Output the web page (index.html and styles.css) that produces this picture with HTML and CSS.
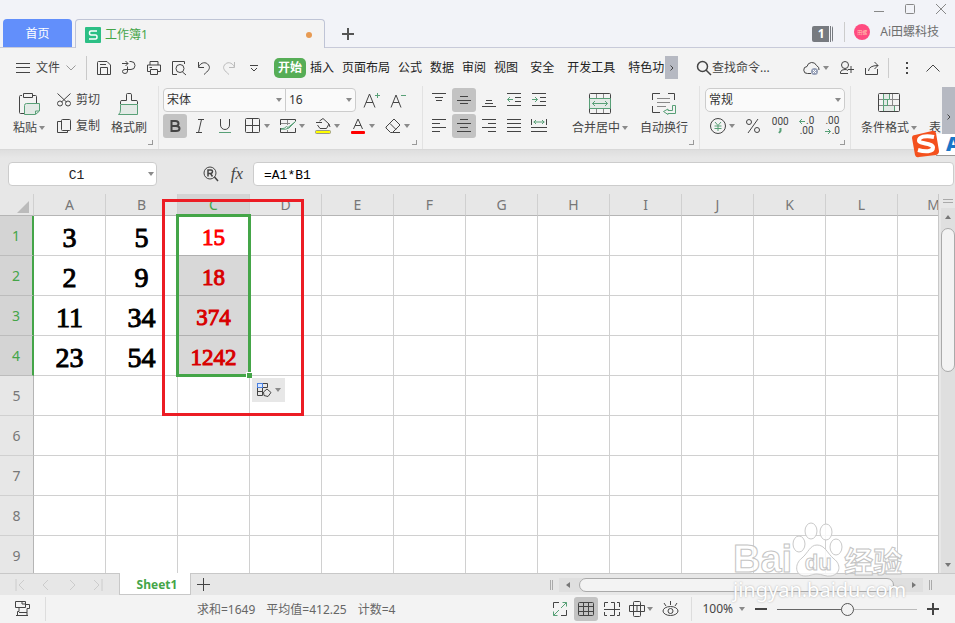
FILE: index.html
```html
<!DOCTYPE html>
<html lang="zh-CN">
<head>
    <meta charset="UTF-8">
    <meta name="viewport" content="width=device-width, initial-scale=1.0">
    <title>工作簿1</title>
    <link rel="stylesheet" href="styles.css">
</head>
<body>

    <!-- Title bar -->
    <header class="titlebar">
        <button class="home-tab">首页</button>
        <div class="doc-tab">
            <svg class="icon" width="16" height="16"><rect width="16" height="16" rx="1" fill="#2cbf85" stroke="none"/><path d="M12 4H6Q4.500 4 4.500 6T6 8H10.500Q12 8 12 10T10.500 12H4" stroke="#fff" stroke-width="1.500"/></svg>
            <span>工作簿1</span>
            <span class="unsaved"></span>
        </div>
        <button class="new-tab" aria-label="新建"><svg class="icon" width="12" height="12"><path d="M0 6H12M6 0V12" stroke-width="2"/></svg></button>
        <div class="title-right">
            <div class="window-buttons">
                <button aria-label="最小化"><svg class="icon" width="10" height="10"><path d="M0 7.500H10"/></svg></button>
                <button aria-label="最大化"><svg class="icon" width="10" height="10"><rect x=".5" y=".5" width="9" height="9" rx="1"/></svg></button>
                <button aria-label="关闭"><svg class="icon" width="10" height="10"><path d="M0 0L10 10M10 0L0 10"/></svg></button>
            </div>
            <div class="account">
                <span class="count">1</span>
                <span class="user"><span class="avatar">田螺</span>Ai田螺科技</span>
            </div>
        </div>
    </header>

    <!-- Menu -->
    <nav class="menubar">
        <button class="file-menu">
            <svg class="icon" width="14" height="12"><path d="M0 1.500H14M0 5.500H14M0 10.500H14"/></svg>
            文件
            <svg class="icon light" width="10" height="6"><path d="M.5.500L5 5L9.500.500"/></svg>
        </button>
        <div class="quick">
            <button aria-label="保存"><svg class="icon" width="16" height="16"><path d="M1.500 2.500Q1.500 1.500 2.500 1.500H11L14.500 5V14.500H1.500ZM4.500 14V7.500H11.500V14M4 4.500H10"/></svg></button>
            <button aria-label="输出"><svg class="icon" width="16" height="16"><path d="M1 3.500H7M4.500 1L7 3.500L4.500 6M8.500 1.500H10A4 4 0 0 1 10 9.500H4Q1.500 9.500 1.500 11.500T4 13.500Q6.500 13.500 6.500 11V6.500"/></svg></button>
            <button aria-label="打印"><svg class="icon" width="16" height="16"><path d="M4 5V1.500H12V5M4 11.500H1.500V5H14.500V11.500H12M4.500 9.500H11.500V14.500H4.500ZM3.500 7.500H6"/></svg></button>
            <button aria-label="打印预览"><svg class="icon" width="16" height="16"><path d="M6 14.500H1.500V1.500H13.500V4M11.500 12L15 15"/><circle cx="9" cy="8.500" r="4"/></svg></button>
            <button aria-label="撤销"><svg class="icon" width="16" height="16"><path d="M2.500 2V7.500H8M2.500 7C5 2 10 1.500 12.500 5S12 11 8 14.500"/></svg></button>
            <button aria-label="恢复" class="faded"><svg class="icon" width="16" height="16"><path d="M13.500 2V7.500H8M13.500 7C11 2 6 1.500 3.500 5S4 11 8 14.500"/></svg></button>
            <button aria-label="更多"><svg class="icon" width="16" height="16"><path d="M4 5.500H12M5 8L8 11L11 8"/></svg></button>
        </div>
        <div class="tabs">
            <a href="#" class="active">开始</a>
            <a href="#">插入</a>
            <a href="#">页面布局</a>
            <a href="#">公式</a>
            <a href="#">数据</a>
            <a href="#">审阅</a>
            <a href="#">视图</a>
            <a href="#" class="extra">安全</a>
            <a href="#" class="extra">开发工具</a>
            <a href="#" class="extra">特色功</a>
        </div>
        <button class="scroll-tabs" aria-label="更多选项卡"><svg class="icon" width="4" height="6"><path d="M.5.500L3 3L.5 5.500"/></svg></button>
        <button class="search">
            <svg class="icon" width="16" height="16"><circle cx="6.500" cy="6.500" r="5" stroke-width="1.500"/><path d="M10 10L15 15" stroke-width="1.500"/></svg>查找命令...
        </button>
        <div class="share">
            <button aria-label="云同步"><svg class="icon" width="18" height="16"><path d="M8 13.500H4.500A3.500 3.500 0 0 1 4 6.500A5 5 0 0 1 13.500 5.500Q16.500 7 16 10"/><circle cx="11.500" cy="11.500" r="3.500" fill="#97a1b8" stroke="none"/><path d="M10 10L13 13M13 10L10 13" stroke="#fff"/></svg><i class="caret"></i></button>
            <button aria-label="协作"><svg class="icon" width="15" height="16"><circle cx="6" cy="5" r="3.500"/><path d="M9 13.500H1.500V12Q2 9.500 6 9.500Q8 9.500 9 10.500M12 6V13M9 9.500H15"/></svg></button>
            <button aria-label="分享"><svg class="icon" width="16" height="16"><path d="M1.500 8V14.500H13.500V9M4.500 11Q5 5.500 14 5.500M10.500 2L14 5.500L10.500 9"/></svg></button>
        </div>
        <div class="menu-end">
            <button aria-label="选项"><svg class="icon" width="4" height="14"><path d="M2 1V3M2 6V8M2 11V13" stroke-width="2"/></svg></button>
            <button aria-label="收起功能区"><svg class="icon" width="14" height="8"><path d="M.5 7.500L7 1L13.500 7.500"/></svg></button>
        </div>
    </nav>

    <!-- Ribbon -->
    <section class="ribbon">
        <div class="group clipboard">
            <div class="tools">
                <button class="big">
                    <svg class="icon" width="24" height="24"><path d="M5 3.500H3.500Q2.500 3.500 2.500 4.500V20.500Q2.500 21.500 3.500 21.500H7M16 3.500H18.500Q19.500 3.500 19.500 4.500V11M6.500 1.500H15.500V5.500H6.500Z"/><path d="M9.500 11.500H22.500V19L18.500 22.500H7.500V13.500Q7.500 11.500 9.500 11.500ZM18.500 22V19H22" stroke="#58a077" fill="#e3eae6"/></svg>
                    <span>粘贴<i class="caret"></i></span>
                </button>
                <div class="stack">
                    <button><svg class="icon" width="16" height="16"><circle cx="4" cy="11.500" r="2.500"/><circle cx="12" cy="11.500" r="2.500"/><path d="M1.500 1.500L10.500 10M14.500 1.500L5.500 10"/></svg>剪切</button>
                    <button><svg class="icon" width="16" height="16"><rect x="5.500" y="1.500" width="9" height="11" rx="1"/><path d="M5 3.500H1.500V14.500H11.500V13"/></svg>复制</button>
                </div>
                <button class="big">
                    <svg class="icon" width="24" height="24"><path d="M3.500 12V9.500Q3.500 8.500 5 8.500H9.500V2.500Q9.500 1.500 10.500 1.500H13Q14.500 1.500 14.500 2.500V8.500H19Q20.500 8.500 20.500 9.500V12"/><path d="M3.500 12.500H20.500V22.500H1.500Q3.500 21 3.500 18Z" stroke="#58a077" fill="#e3eae6"/></svg>
                    <span>格式刷</span>
                </button>
            </div>
            <i class="launcher"></i>
        </div>

        <div class="group font-group">
            <div class="tools">
                <div class="stack">
                    <div class="row">
                        <label class="drop font-name"><select aria-label="字体"><option>宋体</option></select><i class="caret"></i></label>
                        <label class="drop font-size"><select aria-label="字号"><option>16</option></select><i class="caret"></i></label>
                        <button aria-label="增大字号"><svg class="icon" width="18" height="16"><path d="M1 15.500L6.500 2L12 15.500M3 10.500H10"/><path d="M12 3.500H17M14.500 1V6" stroke="#58a077"/></svg></button>
                        <button aria-label="减小字号"><svg class="icon" width="18" height="16"><path d="M2 15.500L7 3L12 15.500M4 10.500H10"/><path d="M12 3.500H17" stroke="#58a077"/></svg></button>
                    </div>
                    <div class="row format">
                        <button class="on" aria-label="加粗"><svg class="icon" width="16" height="16"><path d="M4.500 3H8.500Q11.500 3 11.500 5.500T8.500 8H4.500ZM4.500 8H9Q12.500 8 12.500 10.500T9 13H4.500Z" stroke-width="2"/></svg></button>
                        <button aria-label="倾斜"><svg class="icon" width="16" height="16"><path d="M6 1.500H12M4 14.500H10M9.500 1.500L6.500 14.500"/></svg></button>
                        <button aria-label="下划线"><svg class="icon" width="16" height="16"><path d="M3.500 1V7A4.500 4.500 0 0 0 12.500 7V1"/><path d="M2 14.500H14" stroke="#58a077"/></svg></button>
                        <button class="wide" aria-label="边框"><svg class="icon" width="16" height="16"><rect x=".5" y=".5" width="14" height="14" rx="1"/><path d="M7.500 1V15M1 7.500H15"/></svg><i class="caret"></i></button>
                        <button class="wide" aria-label="表格样式"><svg class="icon" width="16" height="16"><path d="M15.500 3V1.500H.5V7M.5 10V14.500H15.500V10"/><path d="M1 5.500H10M7.500 2V7M7.500 12V14M1 10.500H3" stroke="#888"/><path d="M15.500 3.500L9 10Q6 12 1 11Q5 10.500 6.500 8.500L8 9.500L15.500 3.500" stroke="#58a077"/></svg><i class="caret"></i></button>
                        <button class="wide" aria-label="填充颜色"><svg class="icon" width="16" height="18"><path d="M1 5.500H7M4.500 4L8 1.500L14 7L11.500 11.500H5L2.500 8M14 7L15 10"/><rect x=".5" y="13.500" width="15" height="3" rx="1" fill="#ff0" stroke="#998"/></svg><i class="caret"></i></button>
                        <button class="wide" aria-label="字体颜色"><svg class="icon" width="16" height="18"><path d="M3.500 12L8 2L12.500 12M5 8.500H11"/><rect x="1" y="14" width="14" height="3" rx="1" fill="#f00" stroke="none"/></svg><i class="caret"></i></button>
                        <button class="wide" aria-label="清除"><svg class="icon" width="16" height="16"><path d="M1 9L9 1L15 7L7.500 14.500H5.500L1 10ZM5 5.500L11 11.500M7.500 14.500H15"/></svg><i class="caret"></i></button>
                    </div>
                </div>
            </div>
            <i class="launcher"></i>
        </div>

        <div class="group align-group">
            <div class="tools">
                <div class="align-grid">
                    <button aria-label="顶端对齐"><svg class="icon" width="16" height="16"><path d="M1 1.500H15M4 5.500H12M5 8.500H11"/></svg></button>
                    <button class="on" aria-label="垂直居中"><svg class="icon" width="16" height="16"><path d="M4 4.500H12M1 8.500H15M4 11.500H12"/></svg></button>
                    <button aria-label="底端对齐"><svg class="icon" width="16" height="16"><path d="M5 8.500H11M4 11.500H12M1 14.500H15"/></svg></button>
                    <button aria-label="减少缩进"><svg class="icon" width="16" height="16"><path d="M1 1.500H15M9 5.500H15M9 9.500H15M1 13.500H15"/><path d="M1.500 7.500H7M4 5L1.500 7.500L4 10" stroke="#58a077"/></svg></button>
                    <button aria-label="增加缩进"><svg class="icon" width="16" height="16"><path d="M1 1.500H15M9 5.500H15M9 9.500H15M1 13.500H15"/><path d="M1 7.500H6.500M4 5L6.500 7.500L4 10" stroke="#58a077"/></svg></button>
                    <button aria-label="左对齐"><svg class="icon" width="16" height="16"><path d="M1 1.500H15M1 5.500H9M1 9.500H15M1 13.500H9"/></svg></button>
                    <button class="on" aria-label="水平居中"><svg class="icon" width="16" height="16"><path d="M4 1.500H12M1 5.500H15M4 9.500H12M1 13.500H15"/></svg></button>
                    <button aria-label="右对齐"><svg class="icon" width="16" height="16"><path d="M1 1.500H15M7 5.500H15M1 9.500H15M7 13.500H15"/></svg></button>
                    <button aria-label="两端对齐"><svg class="icon" width="16" height="16"><path d="M1 1.500H15M1 5.500H15M1 9.500H15M1 13.500H15"/></svg></button>
                    <button aria-label="分散对齐"><svg class="icon" width="16" height="16"><path d="M.5 1V7M15.500 1V7M0 9.500H16M0 13.500H16"/><path d="M2.500 4H13.500M5 2L3 4L5 6M11 2L13 4L11 6" stroke="#58a077"/></svg></button>
                </div>
                <button class="big merge">
                    <svg class="icon" width="24" height="24"><rect x="1.500" y="1.500" width="21" height="20" rx="1"/><path d="M8.500 2V6M15.500 2V6M8.500 17V21M15.500 17V21" stroke="#888"/><path d="M1.500 6.500H22.500V16.500H1.500Z" stroke="#58a077" fill="#e3eae6"/><path d="M4.500 11.500H19.500M7 9L4.500 11.500L7 14M17 9L19.500 11.500L17 14" stroke="#58a077"/></svg>
                    <span>合并居中<i class="caret"></i></span>
                </button>
                <button class="big wrap">
                    <svg class="icon" width="24" height="24"><path d="M8 1.500H.5V8M16 1.500H22.500V8M.5 14V20.500H8"/><path d="M5 6.500H18M5 10.500H18M5 14.500H14" stroke="#888"/><path d="M20.500 13.500H23.500V21.500H16V22.500L11.500 19.500L16 17V18.500H20.500Z" stroke="#58a077"/></svg>
                    <span>自动换行</span>
                </button>
            </div>
            <i class="launcher"></i>
        </div>

        <div class="group number-group">
            <div class="tools">
                <div class="stack">
                    <label class="drop number"><select aria-label="数字格式"><option>常规</option></select><i class="caret"></i></label>
                    <div class="row numbers">
                        <button aria-label="货币"><svg class="icon" width="16" height="16"><circle cx="8" cy="8" r="7.500"/><path d="M5 4L8 7.500L11 4M8 7.500V13M4.500 8H11.500M4.500 10.500H11.500" stroke="#58a077"/></svg><i class="caret"></i></button>
                        <button aria-label="百分比"><svg class="icon" width="16" height="16"><circle cx="4" cy="4" r="2.500"/><circle cx="12" cy="12" r="2.500"/><path d="M13 1L3 15"/></svg></button>
                        <button class="digits" aria-label="千位分隔"><span>000</span><svg class="icon green" width="4" height="8"><path d="M2.500 1V4L1 6" stroke-width="2"/></svg></button>
                        <button class="digits" aria-label="增加小数位"><span><svg class="icon green" width="7" height="7"><path d="M.5 3.500H6M3 1L.5 3.500L3 6"/></svg>.0</span><span>.00</span></button>
                        <button class="digits" aria-label="减少小数位"><span>.00</span><span><svg class="icon green" width="7" height="7"><path d="M0 3.500H5.500M3 1L5.500 3.500L3 6"/></svg>.0</span></button>
                    </div>
                </div>
            </div>
            <i class="launcher"></i>
        </div>

        <div class="group style-group">
            <div class="tools">
                <button class="big">
                    <svg class="icon" width="24" height="24"><path d="M6.500 1.500H12.500V7.500H6.500ZM6.500 7.500H10.500V13.500H6.500ZM6.500 13.500H17.500V19.500H6.500Z" stroke="#58a077" fill="#e3eae6"/><path d="M2 7.500H6M13 7.500H22M2 13.500H6M11 13.500H22M15.500 2V13" stroke="#888"/><rect x="1.500" y="1.500" width="21" height="18" rx="1"/></svg>
                    <span>条件格式<i class="caret"></i></span>
                </button>
                <button class="big table-style"><span>表</span></button>
            </div>
        </div>
        <button class="scroll-ribbon" aria-label="更多工具"><svg class="icon" width="4" height="6"><path d="M.5.500L3 3L.5 5.500"/></svg></button>

        <!-- Input method badge floating over the ribbon -->
        <div class="ime">
            <svg width="28" height="28" viewBox="0 0 28 28"><path d="M3 5Q0 5 0 8L3 25Q4 28 7 27L24 25Q27 24 27 21L24 3Q23 0 20 1Z" fill="#f4511e"/><path d="M22 7C13 5 7 7 7 10.500S21 13 21 17.500S13 22 6 20" fill="none" stroke="#fff" stroke-width="4"/></svg>
            <b>A</b>
        </div>
    </section>

    <!-- Formula bar -->
    <section class="formula-bar">
        <div class="drop name-box"><input type="text" value="C1" aria-label="名称框"><i class="caret"></i></div>
        <button aria-label="查找公式"><svg class="icon" width="16" height="16"><circle cx="7" cy="7" r="6"/><path d="M5 10.500V4H8Q9.500 4 9.500 5.500T8 7.500H5M7.500 7.500L9.500 10.500M11.500 11L15 15" stroke-width="1.500"/></svg></button>
        <button class="fx">fx</button>
        <input class="formula" type="text" value="=A1*B1" aria-label="编辑栏">
    </section>

    <!-- Sheet -->
    <main class="sheet">
        <div class="grid">
            <table>
                <thead>
                    <tr><th class="corner"><svg width="12" height="12"><path d="M12 0V12H0Z" fill="#bbb"/></svg></th><th>A</th><th>B</th><th class="picked">C</th><th>D</th><th>E</th><th>F</th><th>G</th><th>H</th><th>I</th><th>J</th><th>K</th><th>L</th><th>M</th></tr>
                </thead>
                <tbody>
                    <tr><th class="picked">1</th><td>3</td><td>5</td><td class="result first">15</td><td></td><td></td><td></td><td></td><td></td><td></td><td></td><td></td><td></td><td></td></tr>
                    <tr><th class="picked">2</th><td>2</td><td>9</td><td class="result">18</td><td></td><td></td><td></td><td></td><td></td><td></td><td></td><td></td><td></td><td></td></tr>
                    <tr><th class="picked">3</th><td>11</td><td>34</td><td class="result">374</td><td></td><td></td><td></td><td></td><td></td><td></td><td></td><td></td><td></td><td></td></tr>
                    <tr><th class="picked">4</th><td>23</td><td>54</td><td class="result">1242</td><td></td><td></td><td></td><td></td><td></td><td></td><td></td><td></td><td></td><td></td></tr>
                    <tr><th>5</th><td></td><td></td><td></td><td></td><td></td><td></td><td></td><td></td><td></td><td></td><td></td><td></td><td></td></tr>
                    <tr><th>6</th><td></td><td></td><td></td><td></td><td></td><td></td><td></td><td></td><td></td><td></td><td></td><td></td><td></td></tr>
                    <tr><th>7</th><td></td><td></td><td></td><td></td><td></td><td></td><td></td><td></td><td></td><td></td><td></td><td></td><td></td></tr>
                    <tr><th>8</th><td></td><td></td><td></td><td></td><td></td><td></td><td></td><td></td><td></td><td></td><td></td><td></td><td></td></tr>
                    <tr><th>9</th><td></td><td></td><td></td><td></td><td></td><td></td><td></td><td></td><td></td><td></td><td></td><td></td><td></td></tr>
                </tbody>
            </table>
            <div class="selection"></div>
            <div class="handle"></div>
            <button class="fill-options" aria-label="自动填充选项">
                <svg class="icon" width="16" height="16"><path d="M1.500 6V13.500H6.500V6M1.500 9.500H6M6.500 1.500H11.500V5.500H6.500M11 7L15 10.500L12 14.500L8 13.500L7.500 10Z"/><rect x="1.500" y="1.500" width="5" height="4" fill="#dce9ff" stroke="#4a80e0"/></svg>
                <i class="caret"></i>
            </button>
            <div class="red-frame"></div>
        </div>
        <div class="v-scroll">
            <i class="split"></i>
            <div class="v-track">
                <i class="arrow up"></i>
                <div class="v-thumb"></div>
                <i class="arrow down"></i>
            </div>
        </div>
    </main>

    <!-- Sheet tabs and horizontal scroll bar -->
    <section class="sheet-bar">
        <div class="sheet-nav">
            <button aria-label="第一张"><svg class="icon" width="10" height="12"><path d="M1 0V12M9 1L4 6L9 11"/></svg></button>
            <button aria-label="上一张"><svg class="icon" width="10" height="12"><path d="M7 1L2 6L7 11"/></svg></button>
            <button aria-label="下一张"><svg class="icon" width="10" height="12"><path d="M3 1L8 6L3 11"/></svg></button>
            <button aria-label="最后一张"><svg class="icon" width="10" height="12"><path d="M9 0V12M1 1L6 6L1 11"/></svg></button>
        </div>
        <button class="sheet-tab">Sheet1</button>
        <button class="add-sheet" aria-label="新建工作表"><svg class="icon" width="13" height="13"><path d="M0 6.500H13M6.500 0V13"/></svg></button>
        <div class="h-scroll">
            <i class="grip"></i>
            <div class="h-track">
                <i class="arrow left"></i>
                <div class="h-thumb"></div>
                <i class="arrow right"></i>
            </div>
            <i class="grip"></i>
        </div>
    </section>

    <!-- Status bar -->
    <footer class="status">
        <button class="macro" aria-label="宏"><svg class="icon" width="17" height="16"><path d="M1.500.500H11.500V6.500H1.500ZM11.500 3.500H15.500V7.500H13V14.500H3.500V10.500H5V7M5 11.500H13M2 14.500H14M8 1V3H11"/></svg></button>
        <div class="totals"><span>求和=1649</span><span>平均值=412.25</span><span>计数=4</span></div>
        <div class="views">
            <button aria-label="全屏"><svg class="icon" width="16" height="16"><path d="M7 1.500H1.500V7M9 14.500H14.500V9"/><path d="M9 7L14.500 1.500M10.500 1.500H14.500V5.500M7 9L1.500 14.500M5.500 14.500H1.500V10.500" stroke="#58a077"/></svg></button>
            <button class="on" aria-label="普通视图"><svg class="icon" width="16" height="14"><rect x=".5" y=".5" width="15" height="13" rx="1"/><path d="M5.500 1V13M10.500 1V13M1 4.500H15M1 9.500H15"/></svg></button>
            <button aria-label="分页预览"><svg class="icon" width="16" height="14"><path d="M4 .5H.5V5M7 .5H10.500V13.500M0 7.500H16M15.500 5V.5H13M.5 10V13.500H3M6 13.500H10.500M15.500 10V13.500H13"/></svg></button>
            <button class="with-caret" aria-label="页面布局"><svg class="icon" width="16" height="16"><rect x="4.500" y=".5" width="7" height="15" rx="1"/><path d="M4 4.500H.5V10.500H4M12 4.500H15.500V10.500H12M5 4.500H11M5 10.500H11M8 5V10"/></svg><i class="caret"></i></button>
            <button aria-label="护眼模式"><svg class="icon" width="17" height="16"><ellipse cx="8.500" cy="10" rx="7.500" ry="4.500"/><circle cx="8.500" cy="10" r="2.500"/><path d="M8.500 4V0M4 5L2 2M13 5L15 2"/></svg></button>
        </div>
        <div class="zoom">
            <button class="percent">100%<i class="caret"></i></button>
            <button aria-label="缩小"><svg class="icon" width="12" height="12"><path d="M0 6H12" stroke-width="2"/></svg></button>
            <input type="range" min="0" max="100" value="50" aria-label="缩放">
            <button aria-label="放大"><svg class="icon" width="12" height="12"><path d="M0 6H12M6 0V12" stroke-width="2"/></svg></button>
        </div>
    </footer>

    <div class="watermark">
        <div class="brand">
            <span class="bai">Bai</span>
            <span class="paw">
                <svg width="52" height="56" viewBox="0 0 52 56"><g fill="#fff" fill-opacity=".8" stroke="#c9c9c9"><ellipse cx="7" cy="22" rx="6" ry="8"/><ellipse cx="19" cy="9" rx="6" ry="8"/><ellipse cx="34" cy="10" rx="6" ry="8"/><ellipse cx="44" cy="25" rx="6" ry="8"/><path d="M25 23C18 23 16 31 10 36C2 42 3 54 13 54C19 54 20 52 25 52S34 55 39 54C49 52 49 42 42 37C35 31 33 23 25 23Z"/></g></svg>
                <span class="du">du</span>
            </span>
            <span class="jingyan">经验</span>
        </div>
        <div class="site">jingyan.baidu.com</div>
    </div>

</body>
</html>
```
FILE: styles.css
```css
* {
    box-sizing: border-box;
}

body {
    margin: 0;
    height: 100vh;
    display: flex;
    flex-direction: column;
    overflow: hidden;
    position: relative;
    font-family: "Noto Sans", "Noto Sans CJK SC", sans-serif;
    font-size: 12px;
    line-height: 16px;
    color: #444;
    background: #f3f3f3;
}

button, input, select {
    font: inherit;
    color: inherit;
    margin: 0;
    padding: 0;
    border: 0;
    background: none;
}

button {
    display: flex;
    align-items: center;
    justify-content: center;
    white-space: nowrap;
}

a {
    color: inherit;
    text-decoration: none;
}

.icon {
    display: block;
    flex: none;
    fill: none;
    stroke: currentColor;
}

.caret {
    flex: none;
    display: inline-block;
    border: 3px solid transparent;
    border-top: 4px solid #8a8a8a;
    border-bottom: 0;
}

.on {
    background: #c3c3c3;
    border-radius: 3px;
}

.green {
    color: #58a077;
}

/* Title bar */
.titlebar {
    flex: none;
    height: 48px;
    display: flex;
    align-items: flex-end;
    padding-left: 3px;
    background: #f2f3f8;
    border-bottom: 1px solid #c8cad9;
}

.home-tab {
    width: 69px;
    height: 28px;
    padding-top: 2px;
    color: #fff;
    background: #628ffb;
    border-radius: 4px 4px 0 0;
}

.doc-tab {
    width: 250px;
    height: 29px;
    margin: 0 0 -1px 3px;
    padding: 2px 12px 0 9px;
    display: flex;
    align-items: center;
    gap: 4px;
    color: #44a548;
    background: #f3f3f3;
    border: 1px solid #bfc4d6;
    border-bottom: 0;
    border-radius: 4px 4px 0 0;
}

.unsaved {
    width: 6px;
    height: 6px;
    margin-left: auto;
    border-radius: 50%;
    background: #e79a52;
}

.new-tab {
    height: 28px;
    padding: 1px 17px 0;
    color: #555;
}

.title-right {
    align-self: stretch;
    margin-left: auto;
    display: flex;
    flex-direction: column;
    align-items: flex-end;
}

.window-buttons {
    display: flex;
    gap: 21px;
    padding: 4px 9px 4px 0;
    color: #888;
}

.account {
    display: flex;
    align-items: center;
    gap: 11px;
    height: 28px;
    padding-right: 16px;
    color: #6f6f6f;
}

.count {
    width: 21px;
    margin-top: 4px;
    padding-right: 3px;
    text-align: center;
    color: #fff;
    font-weight: bold;
    background: linear-gradient(90deg, #777a80 17px, #f2f3f8 17px 18px, #777a80 18px 19px, #f2f3f8 19px 20px, #777a80 20px);
    border-radius: 2px;
}

.user {
    display: flex;
    align-items: center;
    gap: 10px;
    height: 20px;
    padding-left: 9px;
    border-left: 1px solid #ccc;
}

.avatar {
    display: flex;
    align-items: center;
    justify-content: center;
    width: 16px;
    height: 16px;
    border-radius: 50%;
    background: #ff4b80;
    color: #ffc9b0;
    font-size: 5px;
}

/* Menu */
.menubar {
    flex: none;
    display: flex;
    align-items: center;
    height: 38px;
    padding-top: 1px;
}

.file-menu {
    height: 24px;
    padding: 0 10px 0 16px;
    gap: 6px;
    border-right: 1px solid #c9c9c9;
}

.light {
    color: #999;
}

.quick {
    display: flex;
    gap: 9px;
    padding: 0 12px 0 9px;
}

.faded {
    color: #bbb;
}

.tabs {
    flex: 0 1 391px;
    display: flex;
    align-items: center;
    gap: 8px;
    overflow: hidden;
    white-space: nowrap;
    color: #222;
}

.tabs .active {
    padding: 2px 4px;
    margin-right: -4px;
    color: #fff;
    font-weight: bold;
    background: #56ad56;
    border-radius: 5px;
}

.tabs .extra {
    padding: 0 4px;
    margin-right: -3px;
}

.scroll-tabs {
    width: 13px;
    height: 23px;
    background: #b6b9c2;
}

.search {
    margin-left: 18px;
}

.share {
    display: flex;
    gap: 10px;
    margin-left: auto;
    padding-right: 8px;
}

.share .caret {
    margin-left: 2px;
}

.menu-end {
    display: flex;
    align-items: center;
    height: 20px;
    gap: 17px;
    padding: 0 15px 0 16px;
    border-left: 1px solid #ccc;
}

/* Ribbon */
.ribbon {
    flex: none;
    position: relative;
    display: flex;
    height: 64px;
    border-bottom: 1px solid #d8d8d8;
}

.group {
    flex: none;
    display: flex;
    flex-direction: column;
    justify-content: space-between;
    padding: 2px 0 4px;
}

.group + .group {
    border-left: 1px solid #e2e2e2;
}

.tools {
    display: flex;
}

.stack {
    display: flex;
    flex-direction: column;
    gap: 2px;
}

.stack button {
    height: 24px;
}

.row {
    display: flex;
    align-items: center;
}

.launcher {
    align-self: flex-end;
    width: 5px;
    height: 5px;
    margin-right: 5px;
    border: solid #999;
    border-width: 0 1px 1px 0;
}

.big {
    flex-direction: column;
    gap: 4px;
    padding-top: 4px;
    justify-content: flex-start;
}

.big span {
    display: flex;
    align-items: center;
    gap: 2px;
}

.clipboard {
    width: 158px;
    padding-left: 13px;
}

.clipboard .tools {
    gap: 11px;
}

.clipboard .stack button {
    gap: 4px;
}

.drop {
    display: flex;
    align-items: center;
    height: 24px;
    padding: 0 3px;
    background: #fafafa;
    border: 1px solid #ccc;
    border-radius: 4px;
}

.drop select {
    flex: 1;
    min-width: 0;
    height: 20px;
    appearance: none;
    color: #333;
}

.font-group {
    width: 264px;
    padding-left: 4px;
}

.font-name {
    width: 123px;
    border-radius: 4px 0 0 4px;
}

.font-size {
    width: 71px;
    margin: 0 7px 0 -1px;
    border-radius: 0 4px 4px 0;
}

.font-size + button {
    margin-right: 8px;
}

.format button {
    width: 24px;
    margin-right: 1px;
}

.format .wide {
    width: 28px;
    margin-left: 7px;
    margin-right: 0;
    gap: 3px;
    justify-content: flex-start;
}

.align-group {
    width: 277px;
    padding-left: 4px;
}

.align-grid {
    display: grid;
    grid-template-columns: repeat(5, 24px);
    grid-auto-rows: 24px;
    gap: 2px 1px;
}

.merge {
    margin-left: 21px;
}

.wrap {
    margin-left: 12px;
}

.number-group {
    width: 151px;
    padding-left: 5px;
}

.number {
    width: 140px;
    border-radius: 5px;
}

.numbers {
    justify-content: space-between;
    padding: 0 5px;
}

.numbers .caret {
    margin-left: 3px;
}

.stack .digits {
    flex-direction: column;
    font: 10px/10px "Roboto", sans-serif;
}

.digits span {
    display: flex;
    align-items: center;
    height: 10px;
}

.style-group {
    flex: 1 1 0;
    overflow: hidden;
    padding-left: 10px;
}

.style-group .tools {
    gap: 12px;
}

.table-style {
    padding-top: 32px;
}

.scroll-ribbon {
    width: 13px;
    height: 60px;
    margin-top: 1px;
    background: #b6b9c2;
}

.ime {
    position: absolute;
    right: 0;
    bottom: -9px;
    z-index: 2;
    display: flex;
    align-items: center;
    width: 43px;
    height: 28px;
    overflow: hidden;
    background: linear-gradient(#0000 4px, #fff 4px 25px, #999 25px 26px, #0000 26px) 24px 0 no-repeat;
    color: #1976c8;
    font: bold 20px/24px "Open Sans", sans-serif;
}

.ime svg {
    flex: none;
}

.ime b {
    padding-left: 6px;
}

/* Formula bar */
.formula-bar {
    flex: none;
    display: flex;
    align-items: center;
    height: 44px;
    padding: 4px 1px 0 8px;
    background: linear-gradient(#dedede, #e7e7e7 8px);
}

.name-box {
    width: 149px;
    margin-right: 46px;
    padding: 0 2px;
    background: #fff;
}

.name-box input {
    flex: 1;
    min-width: 0;
    padding: 3px 6px 0 0;
    text-align: center;
    color: #222;
    font: 13px/20px "Liberation Mono", monospace;
}

.fx {
    width: 34px;
    padding-left: 2px;
    font: italic 17px/20px "Liberation Serif", serif;
}

.formula {
    flex: 1;
    height: 24px;
    padding: 2px 10px 0;
    color: #000;
    background: #fff;
    border: 1px solid #ccc;
    border-radius: 4px;
    font: 13px/20px "Liberation Mono", monospace;
}

/* Sheet */
.sheet {
    flex: 1;
    min-height: 0;
    display: flex;
    background: #e7e7e7;
}

.grid {
    flex: 1;
    min-width: 0;
    position: relative;
    overflow: hidden;
    background: #fff;
    border-right: 1px solid #c8c8c8;
}

table {
    width: 970px;
    table-layout: fixed;
    border-spacing: 0;
}

th {
    padding: 0;
    font-size: 14px;
    font-weight: normal;
    line-height: 20px;
    color: #777;
    background: #e7e7e7;
    border-right: 1px solid #d0d0d0;
}

thead th {
    width: 72px;
    height: 22px;
    border-bottom: 1px solid #b5b5b5;
}

thead .corner {
    width: 34px;
}

.corner svg {
    display: block;
    margin: 4px 4px 0 auto;
}

tbody th {
    border-right-color: #b5b5b5;
    border-bottom: 1px solid #d0d0d0;
}

th.picked {
    color: #44a548;
    background: #d4d4d4;
    border-bottom-color: #bcbcbc;
}

tbody .picked {
    border-right: 2px solid #44a548;
}

td {
    height: 40px;
    padding: 4px 0 0;
    text-align: center;
    color: #000;
    font: 28px/34px "Liberation Serif", serif;
    -webkit-text-stroke: 1px currentColor;
    border-right: 1px solid #d0d0d0;
    border-bottom: 1px solid #d0d0d0;
}

.result {
    color: #d80000;
    background: #d8d8d8;
    border-bottom-color: #b0b0b0;
    font-size: 23px;
}

.first {
    color: #f00;
    background: #fff;
}

.selection {
    position: absolute;
    left: 176px;
    top: 20px;
    width: 75px;
    height: 163px;
    border: 3px solid #44a548;
}

.handle {
    position: absolute;
    left: 246px;
    top: 178px;
    width: 6px;
    height: 6px;
    background: #44a548;
    border: solid #fff;
    border-width: 1px 0 0 1px;
}

.fill-options {
    position: absolute;
    left: 252px;
    top: 184px;
    width: 33px;
    height: 24px;
    gap: 3px;
    background: #e7e7e7;
}

.red-frame {
    position: absolute;
    left: 162px;
    top: 5px;
    width: 142px;
    height: 217px;
    border: 3px solid #ec1c24;
}

.v-scroll {
    flex: none;
    display: flex;
    flex-direction: column;
    width: 16px;
    padding-left: 2px;
}

.split {
    height: 4px;
    margin: 5px 2px;
    border: solid #aaa;
    border-width: 1px 0;
}

.v-track {
    flex: 1;
    display: flex;
    flex-direction: column;
    align-items: center;
    padding: 7px 0 6px;
    background: #dfdfdf;
}

.v-thumb {
    width: 14px;
    height: 41%;
    margin: 9px 0 auto;
    background: #f3f3f3;
    border: 1px solid #aaa;
    border-radius: 7px;
}

.arrow {
    flex: none;
    border: 3px solid transparent;
}

.up {
    border-top: 0;
    border-bottom: 4px solid #777;
}

.down {
    border-bottom: 0;
    border-top: 4px solid #777;
}

.left {
    border-left: 0;
    border-right: 4px solid #777;
}

.right {
    border-right: 0;
    border-left: 4px solid #777;
}

/* Sheet tabs */
.sheet-bar {
    flex: none;
    display: flex;
    align-items: center;
    height: 22px;
    background: #e7e7e7;
    border-top: 1px solid #c8c8c8;
}

.sheet-nav {
    display: flex;
    gap: 16px;
    padding: 0 16px 0 15px;
    color: #ccc;
}

.sheet-tab {
    width: 72px;
    height: 22px;
    margin-top: -1px;
    padding: 2px 0 0 4px;
    font-weight: bold;
    color: #44a548;
    background: #fff;
    border: 1px solid #c8c8c8;
    border-top: 0;
}

.add-sheet {
    margin-left: 6px;
}

.h-scroll {
    flex: 0 1 382px;
    display: flex;
    align-items: center;
    gap: 6px;
    margin-left: auto;
    margin-right: 23px;
}

.grip {
    width: 3px;
    height: 10px;
    border: solid #aaa;
    border-width: 0 1px;
}

.h-track {
    flex: 1;
    display: flex;
    align-items: center;
    justify-content: space-between;
    height: 14px;
    padding: 0 7px;
    background: #dfdfdf;
}

.h-thumb {
    width: 90%;
    height: 14px;
    margin: 0 auto 0 9px;
    background: #f3f3f3;
    border: 1px solid #aaa;
    border-radius: 7px;
}

/* Status bar */
.status {
    flex: none;
    display: flex;
    align-items: center;
    height: 28px;
}

.macro {
    height: 24px;
    padding: 0 14px;
    border-right: 1px solid #ddd;
}

.totals {
    display: flex;
    gap: 11px;
    margin-left: 151px;
    padding-top: 1px;
    color: #666;
}

.views {
    display: flex;
    align-items: center;
    gap: 2px;
    height: 24px;
    margin-left: auto;
    padding-right: 9px;
    border-right: 1px solid #ddd;
}

.views button {
    width: 24px;
    height: 24px;
}

.views .with-caret {
    width: 30px;
    gap: 2px;
}

.zoom {
    display: flex;
    align-items: center;
    padding: 0 16px 0 10px;
    gap: 10px;
}

.percent {
    gap: 6px;
}

.zoom input {
    width: 140px;
    height: 16px;
    appearance: none;
}

.zoom input::-webkit-slider-runnable-track {
    height: 1px;
    background: linear-gradient(90deg, #666 50%, #bbb 50%);
}

.zoom input::-webkit-slider-thumb {
    appearance: none;
    width: 13px;
    height: 13px;
    margin-top: -6px;
    background: #f3f3f3;
    border: 1px solid #555;
    border-radius: 50%;
}

/* Watermark */
.watermark {
    position: absolute;
    right: 48px;
    bottom: 21px;
    width: 174px;
    color: rgba(255, 255, 255, 0.8);
    pointer-events: none;
    -webkit-text-stroke: 1px #c4c4c4;
}

.brand {
    display: flex;
    align-items: flex-end;
}

.bai {
    font: bold 38px/38px "Liberation Sans", sans-serif;
}

.paw {
    display: grid;
}

.paw > * {
    grid-area: 1 / 1;
}

.du {
    place-self: end center;
    font: bold 22px/30px "Liberation Sans", sans-serif;
}

.jingyan {
    font: bold 29px/36px "Noto Sans CJK SC", sans-serif;
}

.site {
    color: #fff;
    font: 20px/24px "Noto Sans", sans-serif;
    -webkit-text-stroke: 0;
    text-shadow: 0 0 2px #aaa;
}
```
